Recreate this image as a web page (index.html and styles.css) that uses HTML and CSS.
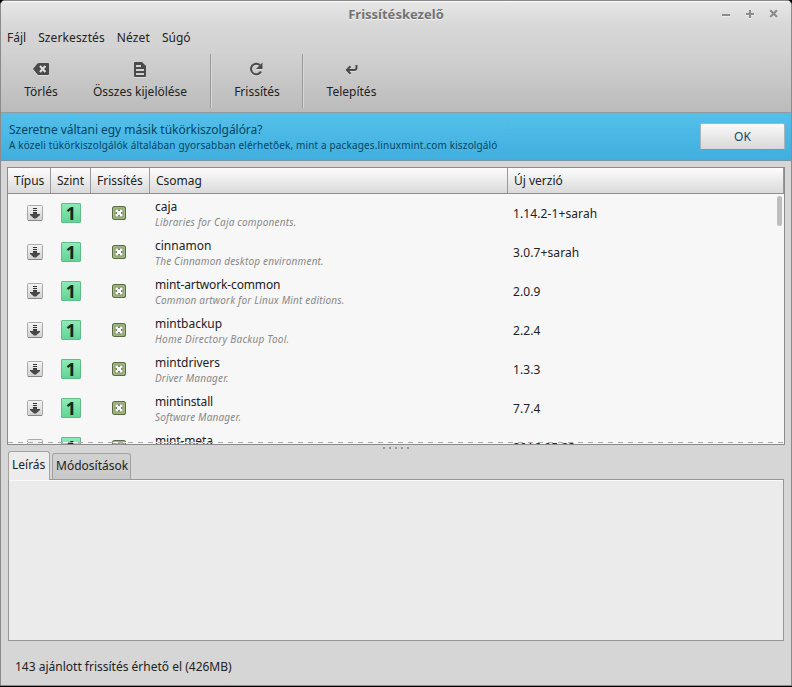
FILE: index.html
```html
<!DOCTYPE html>
<html lang="hu">
<head>
<meta charset="utf-8">
<title>Frissítéskezelő</title>
<link rel="stylesheet" href="styles.css">
</head>
<body>
<svg class="defs" aria-hidden="true">
  <defs>
    <linearGradient id="grey" x1="0" y1="0" x2="0" y2="1"><stop offset="0" stop-color="#f5f5f5"/><stop offset="1" stop-color="#d0d0d0"/></linearGradient>
    <symbol id="pkg" viewBox="0 0 16 16">
      <rect x=".5" y=".5" width="15" height="15" rx="1" fill="url(#grey)" stroke="#aaa"/>
      <path d="M1 15.5H15" stroke="#858585"/>
      <path d="M6 3.5H10M6 5.5H10M6 7.5H10" stroke="#333"/>
      <path d="M6 8H10V9H13V10L9 13.5H7L3 10V9H6Z" fill="#484848"/>
    </symbol>
    <symbol id="check" viewBox="0 0 14 14">
      <rect x=".6" y=".6" width="12.8" height="12.8" rx="2" fill="#b7cf93" stroke="#596b45" stroke-width="1.2"/>
      <rect x="3" y="3" width="8" height="8" fill="#fff" stroke="#71845a" stroke-width="1"/>
      <path d="M6 3.5H8V5H6ZM6 9H8V10.5H6ZM3.5 6V8H5V6ZM9 6V8H10.5V6Z" fill="#71845a"/>
    </symbol>
  </defs>
</svg>
<div class="window">
  <header class="top">
    <div class="titlebar">
      <h1>Frissítéskezelő</h1>
      <svg class="controls" width="60" height="14" viewBox="0 0 60 14" fill="none" stroke="#8c8c8c" stroke-width="2">
        <path d="M3 8H11M27 7H35M31 3V11"/><path d="M51.2 3.2L58 10M58 3.2L51.2 10" stroke-width="2.3"/>
      </svg>
    </div>
    <nav class="menu"><span>Fájl</span><span class="wide">Szerkesztés</span><span class="wide">Nézet</span><span>Súgó</span></nav>
    <div class="toolbar">
      <div class="tool t1">
        <svg width="18" height="16" viewBox="0 0 18 16"><path d="M1 8L5.5 2.6Q6.1 2 7 2H16Q17 2 17 3V13Q17 14 16 14H7Q6.1 14 5.5 13.4Z" fill="#4a4a4a"/><path d="M8 5L13.4 11M13.4 5L8 11" stroke="#ddd" stroke-width="2.2"/></svg>
        <span>Törlés</span>
      </div>
      <div class="tool t2">
        <svg width="16" height="16" viewBox="0 0 16 16"><path d="M2 2Q2 1 3 1H10L14 5V15Q14 16 13 16H3Q2 16 2 15Z" fill="#4a4a4a"/><path d="M4 4H9V6H4ZM4 8H12V10H4ZM4 12H12V14H4Z" fill="#d0d0d0"/></svg>
        <span>Összes kijelölése</span>
      </div>
      <i class="sep"></i>
      <div class="tool t3">
        <svg width="16" height="16" viewBox="0 0 16 16"><path d="M12 10.6A5.3 5.3 0 1 1 11 4.2" fill="none" stroke="#4a4a4a" stroke-width="2"/><path d="M13.5 1.5V8H7Z" fill="#4a4a4a"/></svg>
        <span>Frissítés</span>
      </div>
      <i class="sep"></i>
      <div class="tool t4">
        <svg width="16" height="16" viewBox="0 0 16 16" fill="none" stroke="#4a4a4a" stroke-width="2"><path d="M12.5 4V6.5Q12.5 9 10 9H3.5"/><path d="M6.5 5.2L2.9 9L6.5 12.8"/></svg>
        <span>Telepítés</span>
      </div>
    </div>
  </header>
  <section class="info">
    <div><p class="ask">Szeretne váltani egy másik tükörkiszolgálóra?</p><p class="why">A közeli tükörkiszolgálók általában gyorsabban elérhetőek, mint a packages.linuxmint.com kiszolgáló</p></div>
    <button>OK</button>
  </section>
  <main class="list">
    <div class="grid head"><span>Típus</span><span>Szint</span><span>Frissítés</span><span>Csomag</span><span>Új verzió</span></div>
    <div class="rows">
      <div class="grid row"><svg class="pkg"><use href="#pkg"/></svg><b class="level">1</b><svg class="check"><use href="#check"/></svg><div class="name">caja<em>Libraries for Caja components.</em></div><span class="ver">1.14.2-1+sarah</span></div>
      <div class="grid row"><svg class="pkg"><use href="#pkg"/></svg><b class="level">1</b><svg class="check"><use href="#check"/></svg><div class="name">cinnamon<em>The Cinnamon desktop environment.</em></div><span class="ver">3.0.7+sarah</span></div>
      <div class="grid row"><svg class="pkg"><use href="#pkg"/></svg><b class="level">1</b><svg class="check"><use href="#check"/></svg><div class="name tight">mint-artwork-common<em>Common artwork for Linux Mint editions.</em></div><span class="ver">2.0.9</span></div>
      <div class="grid row"><svg class="pkg"><use href="#pkg"/></svg><b class="level">1</b><svg class="check"><use href="#check"/></svg><div class="name">mintbackup<em class="loose">Home Directory Backup Tool.</em></div><span class="ver">2.2.4</span></div>
      <div class="grid row"><svg class="pkg"><use href="#pkg"/></svg><b class="level">1</b><svg class="check"><use href="#check"/></svg><div class="name">mintdrivers<em>Driver Manager.</em></div><span class="ver">1.3.3</span></div>
      <div class="grid row"><svg class="pkg"><use href="#pkg"/></svg><b class="level">1</b><svg class="check"><use href="#check"/></svg><div class="name tight">mintinstall<em>Software Manager.</em></div><span class="ver">7.7.4</span></div>
      <div class="grid row"><svg class="pkg"><use href="#pkg"/></svg><b class="level">1</b><svg class="check"><use href="#check"/></svg><div class="name tight">mint-meta</div><span class="ver">2016.05.23</span></div>
    </div>
    <i class="thumb"></i>
    <i class="more"></i>
  </main>
  <div class="grip"><i></i><i></i><i></i><i></i><i></i></div>
  <div class="tabs"><span class="tab active">Leírás</span><span class="tab">Módosítások</span></div>
  <section class="panel"></section>
  <footer>143 ajánlott frissítés érhető el (426MB)</footer>
</div>
</body>
</html>
```
FILE: styles.css
```css
* { box-sizing: border-box; }
body { margin: 0; background: #000; font: 12px/16px "Noto Sans", sans-serif; color: #222; }
h1, p { margin: 0; }
.defs { position: absolute; width: 0; height: 0; }
.window { width: 792px; height: 686px; display: flex; flex-direction: column; background: #d6d6d6; border: 1px solid #8b8b8b; border-radius: 5px 5px 0 0; overflow: hidden; white-space: nowrap; }
.top { height: 112px; flex: none; background: linear-gradient(#e7e7e7, #d6d6d6 25%, #d2d2d2 45%, #bbb); box-shadow: inset 0 1px #fafafa; border-bottom: 1px solid #8f9a9f; }
.titlebar { height: 26px; display: grid; grid-template-columns: 1fr auto 1fr; align-items: center; }
h1 { grid-column: 2; font-size: 13px; line-height: 16px; padding-bottom: 1px; color: #737373; text-shadow: 0 1px #f2f2f2; }
.controls { justify-self: end; margin-right: 12px; filter: drop-shadow(0 1px #eee); }
.menu { display: flex; gap: 12px; padding: 3px 6px 0; height: 24px; }
.wide { letter-spacing: .12px; }
.toolbar { display: flex; height: 61px; padding-top: 3px; }
.tool { display: flex; flex-direction: column; align-items: center; padding-top: 7px; gap: 7px; }
.tool svg { filter: drop-shadow(0 1px #dedede); }
.t1 { width: 80px; }
.t2 { width: 118px; }
.t3 { width: 90px; }
.t4 { width: 95px; }
.sep { width: 2px; height: 54px; background: linear-gradient(90deg, #999 50%, #d8d8d8 50%); }
.t2 + .sep { margin-left: 11px; }
.info { height: 48px; flex: none; display: flex; justify-content: space-between; padding: 9px 6px 0 8px; color: #064463; background: linear-gradient(#54c0ea, #40afdf); border-bottom: 1px solid #7797a8; }
.ask { letter-spacing: -.04px; }
.why { font-size: 10px; line-height: 15px; letter-spacing: .145px; }
button { width: 85px; height: 27px; margin-top: 1px; padding: 0; border: 1px solid #a6b5bb; border-bottom-color: #7699a8; border-radius: 2px; background: linear-gradient(#fafafa, #d8d8d8); font: inherit; color: #164763; }
.list { position: relative; width: 778px; height: 278px; flex: none; margin: 6px 0 0 6px; border: 1px solid #8b8b8b; background: #f7f7f7; overflow: hidden; }
.grid { display: grid; grid-template-columns: 43px 40px 59px 358px 276px; }
.head { height: 26px; border-bottom: 1px solid #8f8f8f; background: linear-gradient(#fdfdfd, #dadada); }
.head span { padding: 5px 0 0 6px; border-right: 1px solid #999; }
.row { height: 39px; align-items: center; }
.pkg { width: 16px; height: 16px; margin: 0 0 2px 19px; }
.level { width: 20px; height: 20px; margin: 0 0 2px 10px; border: 1px solid #60bd8a; border-radius: 1px; background: linear-gradient(#8cebb7, #60d595); font-size: 18px; line-height: 18px; text-align: center; color: #12291d; }
.check { width: 14px; height: 14px; margin: 0 0 2px 21px; }
.name { padding-left: 5px; align-self: start; margin-top: 5px; }
.tight { letter-spacing: -.14px; }
.name em { display: block; font-size: 10px; line-height: 15px; letter-spacing: .18px; color: #888; }
.name .loose { letter-spacing: .25px; }
.ver { padding-left: 5px; letter-spacing: .1px; }
.thumb { position: absolute; right: 2px; top: 28px; width: 5px; height: 30px; border-radius: 3px; background: #bcbcbc; }
.more { position: absolute; left: 0; right: 0; bottom: 1px; height: 1px; background: repeating-linear-gradient(90deg, #aaa 0 5px, #f7f7f7 5px 10px); }
.grip { display: flex; justify-content: center; gap: 4px; height: 6px; flex: none; padding: 2px 0 0; }
.grip i { width: 2px; height: 2px; background: #999; }
.tabs { display: flex; height: 28px; flex: none; margin-left: 7px; gap: 2px; align-items: end; position: relative; z-index: 1; }
.tab { border: 1px solid #a2a2a2; border-radius: 3px 3px 0 0; height: 26px; width: 79px; padding: 4px 0 0 3px; background: linear-gradient(#d2d2d2, #c8c8c8); border-bottom: 0; }
.tab.active { height: 29px; width: 42px; margin-bottom: -1px; background: #ececec; padding-top: 5px; }
.panel { height: 162px; flex: none; width: 776px; margin-left: 7px; background: #ebebeb; border: 1px solid #989898; box-shadow: inset 0 1px #fafafa; }
footer { padding: 18px 14px; }
```
